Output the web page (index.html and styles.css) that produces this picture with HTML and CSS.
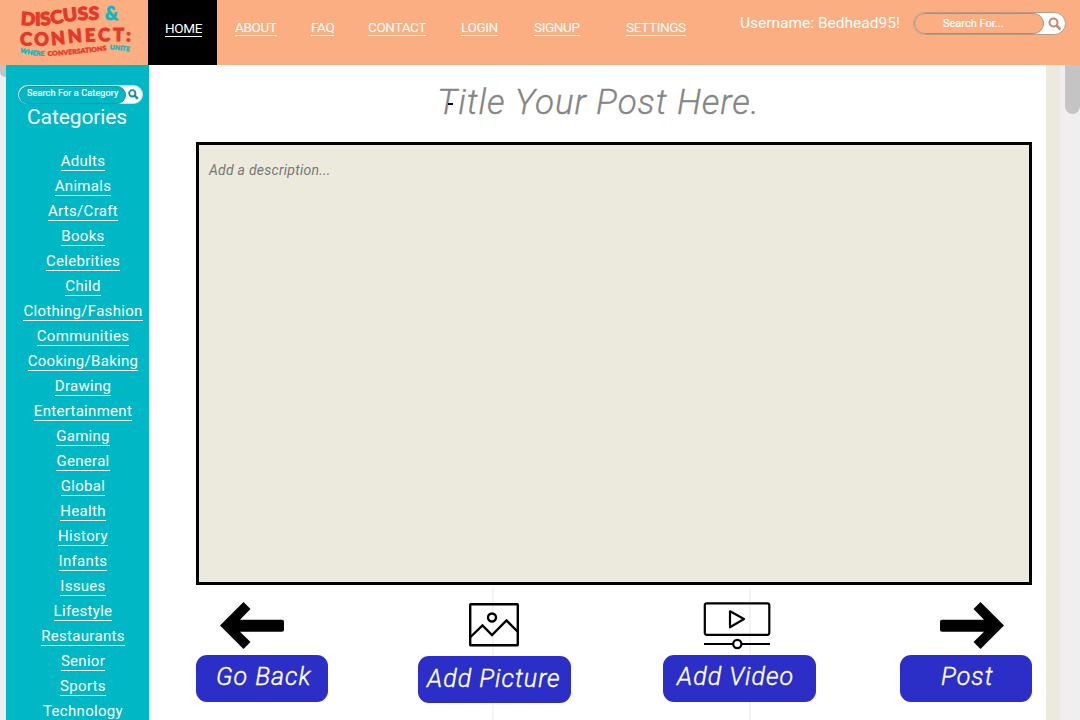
FILE: index.html
```html
<!DOCTYPE html>
<html lang="en">
<head>
<meta charset="utf-8">
<title>Discuss &amp; Connect</title>
<link rel="stylesheet" href="styles.css">
</head>
<body>
<header class="topbar">
  <div class="logo">
    <svg width="148" height="65" viewBox="0 0 148 65" aria-label="Discuss and Connect">
      <defs>
        <path id="l1" d="M20.500 24.500 Q40 27 60 23 T101 20"/>
        <path id="l2" d="M20 45 Q40 47 66 43.500 T134 41.500"/>
        <path id="l3" d="M20 52.500 Q32 56 48 56"/>
        <path id="l4" d="M48 56 Q70 55 109 50"/>
        <path id="l5" d="M110 49.500 Q118 49.800 132 52"/>
      </defs>
      <text class="logo-big"><textPath href="#l1" textLength="79" lengthAdjust="spacingAndGlyphs">DISCUSS</textPath></text>
      <text class="logo-amp" x="105" y="20" textLength="13" lengthAdjust="spacingAndGlyphs">&amp;</text>
      <text class="logo-big"><textPath href="#l2" textLength="111" lengthAdjust="spacing">CONNECT:</textPath></text>
      <text class="logo-small teal"><textPath href="#l3" textLength="25" lengthAdjust="spacingAndGlyphs">WHERE</textPath></text>
      <text class="logo-small"><textPath href="#l4" textLength="59" lengthAdjust="spacingAndGlyphs">CONVERSATIONS</textPath></text>
      <text class="logo-small teal"><textPath href="#l5" textLength="20" lengthAdjust="spacingAndGlyphs">UNITE</textPath></text>
    </svg>
  </div>
  <nav class="nav">
    <a class="nav-item home"><span>HOME</span></a>
    <a class="nav-item about"><span>ABOUT</span></a>
    <a class="nav-item faq"><span>FAQ</span></a>
    <a class="nav-item contact"><span>CONTACT</span></a>
    <a class="nav-item login"><span>LOGIN</span></a>
    <a class="nav-item signup"><span>SIGNUP</span></a>
    <a class="nav-item settings"><span>SETTINGS</span></a>
  </nav>
  <div class="username">Username: Bedhead95!</div>
  <div class="search search-top">
    <div class="field">Search For...</div>
    <svg class="lens" viewBox="0 0 14 14"><circle cx="5.500" cy="5.500" r="4" fill="none" stroke="currentColor" stroke-width="2"/><path d="M8.500 8.500 L12.500 12.500" stroke="currentColor" stroke-width="2.500"/></svg>
  </div>
</header>
<div class="body">
  <div class="left-rail"><div class="left-thumb"></div></div>
  <aside class="sidebar">
    <div class="search search-side">
      <div class="field">Search For a Category</div>
      <svg class="lens" viewBox="0 0 14 14"><circle cx="5.500" cy="5.500" r="4" fill="none" stroke="currentColor" stroke-width="2.400"/><path d="M8.500 8.500 L12.500 12.500" stroke="currentColor" stroke-width="3"/></svg>
    </div>
    <h2 class="side-title">Categories</h2>
    <ul class="cats">
      <li><a>Adults</a></li><li><a>Animals</a></li><li><a>Arts/Craft</a></li><li><a>Books</a></li>
      <li><a>Celebrities</a></li><li><a>Child</a></li><li><a>Clothing/Fashion</a></li><li><a>Communities</a></li>
      <li><a>Cooking/Baking</a></li><li><a>Drawing</a></li><li><a>Entertainment</a></li><li><a>Gaming</a></li>
      <li><a>General</a></li><li><a>Global</a></li><li><a>Health</a></li><li><a>History</a></li>
      <li><a>Infants</a></li><li><a>Issues</a></li><li><a>Lifestyle</a></li><li><a>Restaurants</a></li>
      <li><a>Senior</a></li><li><a>Sports</a></li><li><a>Technology</a></li>
    </ul>
  </aside>
  <main class="main">
    <h1 class="title">Title Your Post Here.<span class="caret"></span></h1>
    <div class="description">Add a description...</div>
    <div class="actions">
      <div class="action back">
        <svg width="64" height="48" viewBox="0 0 64 48"><path d="M0 23.500 L23.500 0 L30.500 7 L20 17.700 H62 Q64 17.700 64 19.700 V27.700 Q64 29.700 62 29.700 H20 L30.500 40 L23.500 47 Z"/></svg>
        <button class="btn">Go Back</button>
      </div>
      <div class="action picture">
        <svg width="50" height="44" viewBox="0 0 50 44" fill="none" stroke="#000" stroke-width="2.400"><rect x="1.200" y="1.200" width="47.600" height="41" rx=".5"/><circle cx="23" cy="14.500" r="4"/><path d="M1.500 34 L13.500 22.500 L23 32 L37.500 17.500 L48.500 28.500"/></svg>
        <button class="btn">Add Picture</button>
      </div>
      <div class="action video">
        <svg width="68" height="48" viewBox="0 0 68 48" fill="none" stroke="#000" stroke-width="2.200"><rect x="1.800" y="1.300" width="64.500" height="31.500" rx="2"/><path d="M27 9.300 V25.300 L41 17 Z" stroke-linejoin="round"/><path d="M1 42 H30 M39 42 H67"/><circle cx="34.300" cy="42" r="4.100"/></svg>
        <button class="btn">Add Video</button>
      </div>
      <div class="action post">
        <svg width="64" height="48" viewBox="0 0 64 48"><path d="M64 23.500 L40.500 0 L33.500 7 L44 17.700 H2 Q0 17.700 0 19.700 V27.700 Q0 29.700 2 29.700 H44 L33.500 40 L40.500 47 Z"/></svg>
        <button class="btn">Post</button>
      </div>
    </div>
  </main>
  <div class="edge"></div>
  <div class="scrollbar"><div class="thumb"></div></div>
</div>
</body>
</html>
```
FILE: styles.css
```css
* { box-sizing: border-box; }
body { margin: 0; width: 1080px; height: 720px; overflow: hidden; background: #fff; font-family: Roboto, "Liberation Sans", sans-serif; }
.topbar { display: flex; height: 65px; background: #faae82; color: #fff; }
.logo { width: 148px; height: 65px; }
.logo svg { display: block; }
.logo text { font-family: Lato, sans-serif; font-weight: 900; fill: #e63829; }
.logo-big { font-size: 18px; stroke: #e63829; stroke-width: 1px; }
.logo .logo-amp { font-size: 19px; fill: #0bb9c6; stroke: #0bb9c6; stroke-width: .8px; }
.logo-small { font-size: 6.500px; stroke: #e63829; stroke-width: .4px; }
.logo .teal { fill: #0bb9c6; stroke: #0bb9c6; }
.nav { display: flex; width: 592px; }
.nav-item { flex: none; height: 65px; padding-top: 19px; font-size: 13.500px; line-height: 16px; letter-spacing: -.35px; white-space: nowrap; }
.nav-item span { display: inline-block; height: 17px; border-bottom: 1px solid #fff; }
.home { width: 69px; padding-left: 17px; margin-right: 18px; padding-top: 20px; background: #000; }
.about { width: 76px; }
.faq { width: 57px; }
.contact { width: 93px; }
.login { width: 73px; }
.signup { width: 92px; }
.settings { width: 70px; }
.username { width: 173px; padding-top: 13px; font-size: 15.500px; line-height: 20px; white-space: nowrap; }
.search { display: flex; align-items: center; background: #fff; border-radius: 12px; }
.search .field { border: 1px solid; border-radius: 12px; color: #fff; white-space: nowrap; }
.search-top { width: 153px; height: 23px; margin-top: 12px; border: 1px solid #b59c8b; color: #c28b6b; }
.search-top .field { width: 130px; height: 21px; padding-left: 28px; background: #faae82; border-color: #b08a73; font-size: 11px; line-height: 19px; -webkit-text-stroke: .2px #fff; }
.lens { width: 14px; height: 14px; margin-left: 4px; flex: none; }
.body { display: flex; height: 655px; }
.left-rail { width: 6px; background: #efefef; }
.left-thumb { height: 12px; background: #c4c4c4; border-radius: 0 0 0 5px; }
.sidebar { width: 143px; background: #00b8c5; color: #fff; padding-top: 20px; }
.search-side { width: 125px; height: 19px; margin-left: 12px; border: 1px solid #b8eaee; color: #168e9b; }
.search-side .field { width: 107px; height: 18px; padding-left: 7px; background: #00b8c5; border-color: #338d96; font-size: 9px; line-height: 13px; letter-spacing: .15px; -webkit-text-stroke: .2px #fff; }
.search-side .lens { width: 11px; height: 11px; margin-left: 2px; }
.side-title { margin: 0 0 20px 21px; font-size: 21px; font-weight: 400; line-height: 26px; letter-spacing: -.1px; white-space: nowrap; }
.cats { list-style: none; margin: 0; padding: 0 0 0 11px; text-align: center; }
.cats li { height: 25px; font-size: 15px; line-height: 22px; white-space: nowrap; letter-spacing: .3px; }
.cats a { display: inline-block; height: 21px; border-bottom: 1px solid #fff; }
.main { width: 897px; padding-left: 47px; }
.title { position: relative; margin: 0; padding: 18px 0 0 241px; height: 77px; font-size: 35px; font-weight: 300; font-style: italic; line-height: 40px; letter-spacing: .9px; color: #858585; -webkit-text-stroke: .3px #858585; white-space: nowrap; }
.caret { position: absolute; left: 252px; top: 38px; width: 5px; height: 2px; background: #000; }
.description { width: 836px; height: 443px; border: 3px solid #000; background: #ebeadd; padding: 15px 10px; font-size: 14px; font-style: italic; line-height: 20px; letter-spacing: .25px; color: #777; }
.actions { display: flex; height: 135px; padding-top: 17px; background: linear-gradient(#f4f4f4, #f4f4f4) 296px 3px / 2px 132px no-repeat, linear-gradient(#f4f4f4, #f4f4f4) 553px 3px / 2px 132px no-repeat; }
.action svg { display: block; }
.btn { display: block; width: 100%; height: 47px; margin-top: 5px; padding: 0 0 3px; border: 0; border-radius: 11px; background: #2c2fc7; color: #fff; font: italic 300 25px/44px Roboto, sans-serif; letter-spacing: 1px; -webkit-text-stroke: .4px #fff; white-space: nowrap; text-align: left; }
.back { width: 132px; margin-right: 90px; }
.back svg { margin-left: 24px; }
.back .btn { padding-left: 20px; }
.picture { width: 153px; margin-right: 92px; }
.picture svg { margin-left: 51px; margin-top: 1px; }
.picture .btn { margin-top: 9px; padding-left: 9px; padding-bottom: 1px; }
.video { width: 153px; margin-right: 84px; }
.video svg { margin-left: 40px; }
.video .btn { padding-left: 14px; }
.post { width: 132px; }
.post svg { margin-left: 40px; }
.post .btn { padding-left: 41px; }
.edge { width: 14px; background: #ebeadd; }
.scrollbar { width: 20px; padding-left: 5px; background: #efefef; }
.thumb { width: 15px; height: 49px; background: #c4c4c4; border-radius: 0 0 8px 8px; }
```
